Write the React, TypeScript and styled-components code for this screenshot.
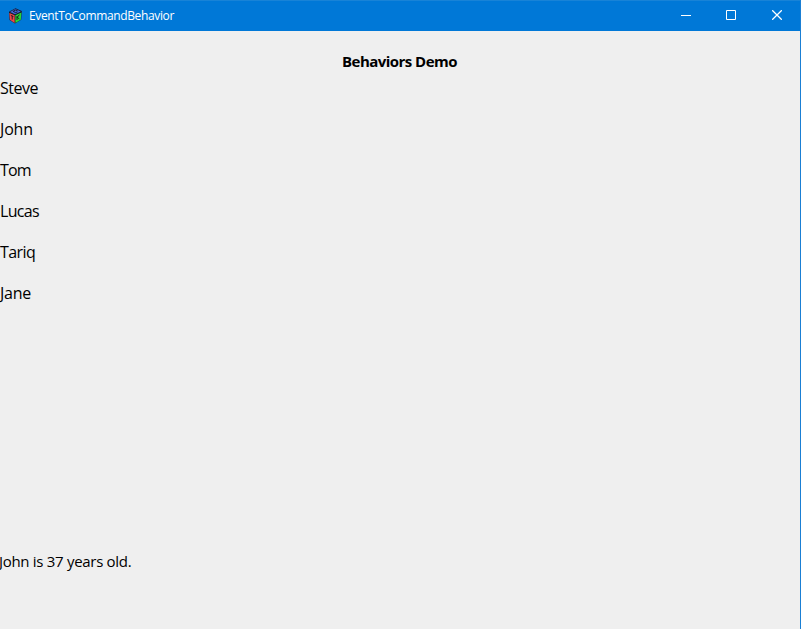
import React from "react";
import styled, { createGlobalStyle } from "styled-components";

const GlobalStyle = createGlobalStyle`
  * { box-sizing: border-box; }
  body { margin: 0; overflow: hidden; background: #efefef; }
`;

const Window = styled.div`
  display: flex;
  flex-direction: column;
  width: 801px;
  height: 629px;
  background: #efefef;
  border-right: 1px solid #1a7fd4;
  overflow: hidden;
  color: #000;
  font-family: "Open Sans", "Noto Sans", sans-serif;
`;

const TitleBar = styled.header`
  display: flex;
  align-items: center;
  flex: none;
  height: 31px;
  margin-right: -1px;
  padding: 0 1px 0 8px;
  background: #0078d7;
  border-top: 1px solid #1883d7;
  color: #fff;
`;

const AppIcon = styled.svg`
  flex: none;
  width: 15px;
  height: 16px;
`;

const WindowTitle = styled.span`
  flex: 1;
  margin-left: 6px;
  font-size: 12px;
  line-height: 16px;
  letter-spacing: -0.36px;
  white-space: nowrap;
`;

const CaptionButton = styled.button<{ $width: number }>`
  display: flex;
  align-items: center;
  justify-content: center;
  width: ${(p) => p.$width}px;
  height: 30px;
  padding: 0 0 2px;
  border: 0;
  background: transparent;
  color: inherit;
`;

const Glyph = styled.svg`
  display: block;
  width: 10px;
  height: 10px;
  fill: none;
  stroke: currentColor;
`;

const Heading = styled.h1`
  flex: none;
  margin: 20px 0 0;
  padding-right: 1px;
  height: 21px;
  font-size: 15px;
  line-height: 21px;
  font-weight: 700;
  letter-spacing: -0.54px;
  text-align: center;
`;

const PeopleList = styled.ul`
  flex: none;
  margin: 0;
  padding: 0;
  list-style: none;
`;

const Person = styled.li<{ $spacing: number }>`
  height: 41px;
  padding-top: 5px;
  font-size: 16px;
  line-height: 22px;
  letter-spacing: ${(p) => p.$spacing}px;
  white-space: nowrap;
`;

const Status = styled.p`
  margin: 233px 0 0 -1px;
  font-size: 15px;
  line-height: 20px;
  letter-spacing: -0.3px;
  white-space: nowrap;
`;

const people = [
  { name: "Steve", spacing: -0.5 },
  { name: "John", spacing: -0.15 },
  { name: "Tom", spacing: -0.8 },
  { name: "Lucas", spacing: -0.7 },
  { name: "Tariq", spacing: -0.6 },
  { name: "Jane", spacing: -0.25 },
];

function CubeIcon() {
  return (
    <AppIcon viewBox="0 0 15 16" aria-hidden="true">
      <path d="M7.5 .3 13.8 3 13.2 11.8 7 15.6 1.5 12 1 3.8Z" fill="#161a2c" />
      <path d="M7.3 .9 12.8 3.4 7 6.3 2 4Z" fill="#4164d8" />
      <path d="M1.3 4.9 6.6 7.3V15L1.9 11.8Z" fill="#f04848" />
      <path d="M7.4 7.3 13.4 4.6 12.8 11.7 7.4 15Z" fill="#28d735" />
      <path
        d="M9.5 2.7 7.5 2.1 5.2 3.3 7.5 4.6 9.5 3.9M2.8 7.4 5.4 8.5M4.2 8V11.5M9 8V12M11.4 6.7 9.2 9.4 11.3 10.8"
        fill="none"
        stroke="#17131f"
        strokeWidth=".9"
      />
    </AppIcon>
  );
}

export default function App() {
  return (
    <>
      <GlobalStyle />
      <Window>
        <TitleBar>
          <CubeIcon />
          <WindowTitle>EventToCommandBehavior</WindowTitle>
          <CaptionButton $width={44} aria-label="Minimize">
            <Glyph viewBox="0 0 10 10"><path d="M0 5.5H10" /></Glyph>
          </CaptionButton>
          <CaptionButton $width={46} aria-label="Maximize">
            <Glyph viewBox="0 0 10 10"><path d="M.5 .5H9.5V9.5H.5Z" /></Glyph>
          </CaptionButton>
          <CaptionButton $width={46} aria-label="Close">
            <Glyph viewBox="0 0 10 10"><path strokeWidth="1.25" d="M.2 .2 9.8 9.8M9.8 .2 .2 9.8" /></Glyph>
          </CaptionButton>
        </TitleBar>
        <Heading>Behaviors Demo</Heading>
        <PeopleList>
          {people.map((p) => (
            <Person key={p.name} $spacing={p.spacing}>{p.name}</Person>
          ))}
        </PeopleList>
        <Status>John is 37 years old.</Status>
      </Window>
    </>
  );
}
